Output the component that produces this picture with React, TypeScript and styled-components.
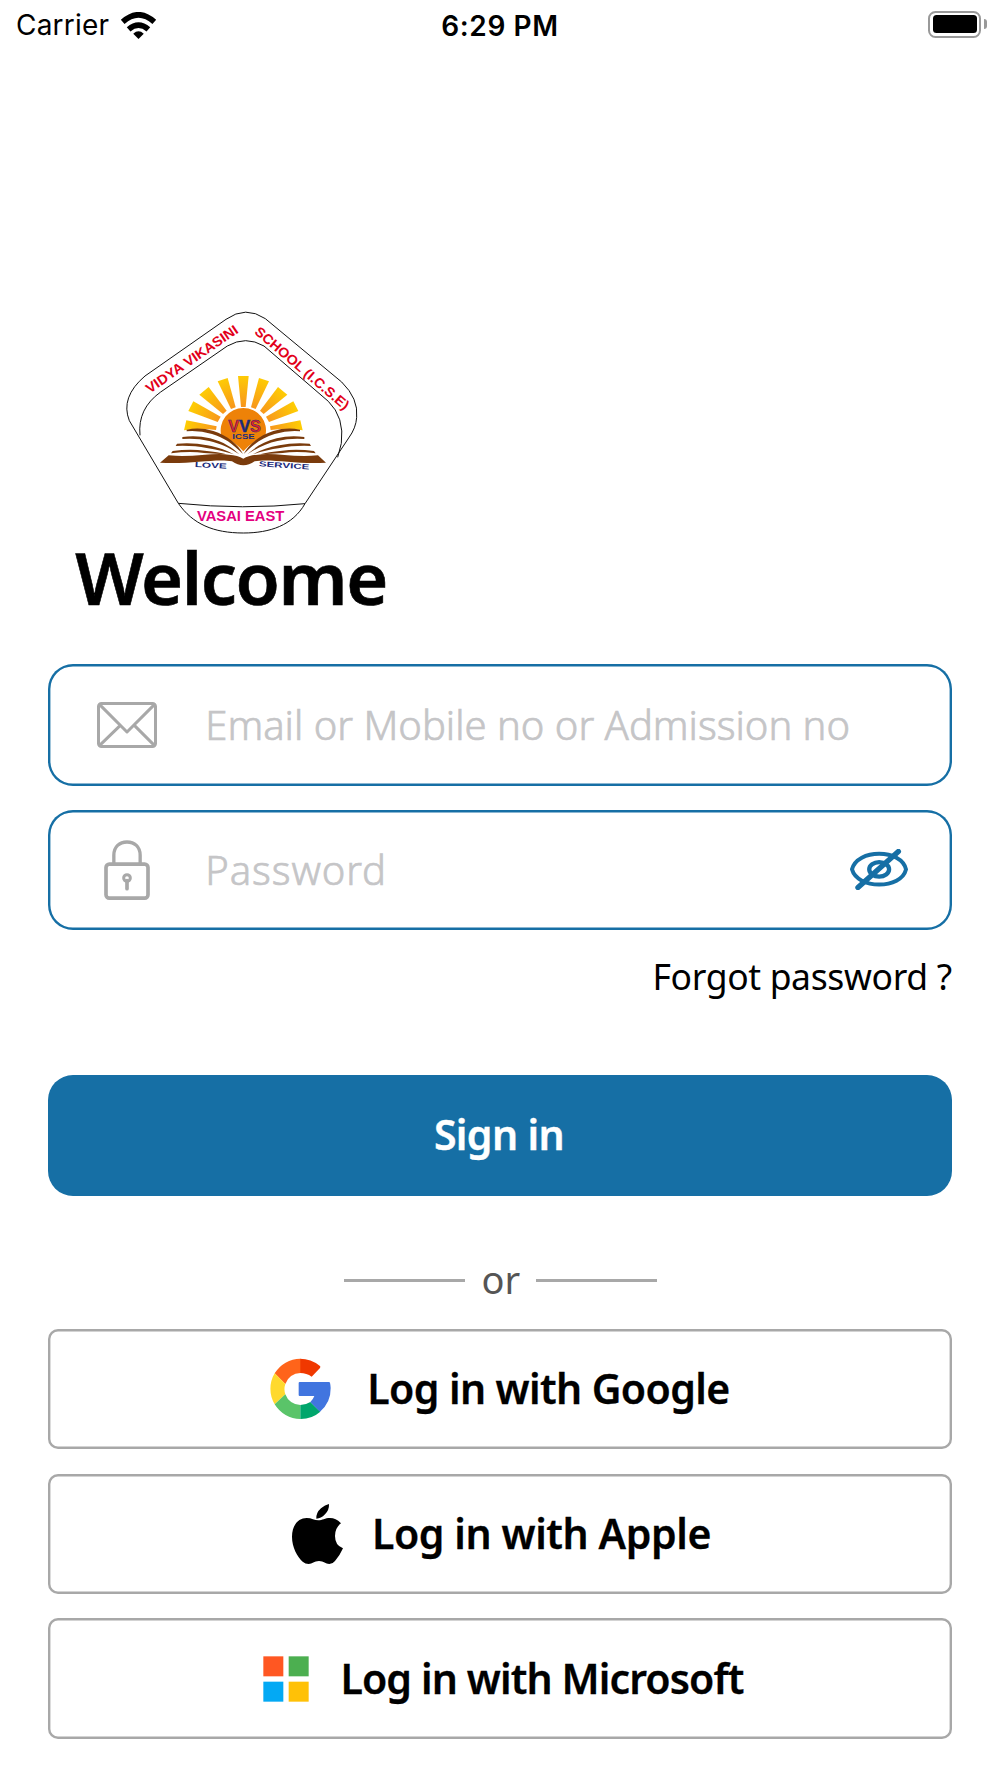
import React, { useState } from 'react';
import styled, { createGlobalStyle } from 'styled-components';

type Provider = {
  name: string;
  icon: React.ReactNode;
  gap: number;
  shift: number;
  spacing: number;
};

const WifiIcon = () => (
  <svg width="37" height="27" viewBox="0 0 110 82">
    <path d="M7 30Q55 -13 103 30" fill="none" stroke="#000" strokeWidth="17" />
    <path d="M25 53Q55 27 85 53" fill="none" stroke="#000" strokeWidth="17" />
    <path d="M39 66Q55 51 71 66L55 82Z" />
  </svg>
);

const MailIcon = () => (
  <svg width="60" height="46" viewBox="0 0 180 138" fill="none" stroke="#a8a8a8" strokeWidth="9" strokeLinejoin="round">
    <rect x="4.5" y="4.5" width="171" height="129" rx="9" />
    <path d="M8 8L90 90L172 8M70 70L8 130M112 70L172 130" />
  </svg>
);

const LockIcon = () => (
  <svg width="46" height="60" viewBox="0 0 137 180" fill="none" stroke="#a8a8a8">
    <rect x="5.5" y="72.5" width="126" height="102" rx="10" strokeWidth="11" />
    <path d="M29 70V46C29 20 46 6 68.500 6S108 20 108 46V70" strokeWidth="10" />
    <circle cx="68.500" cy="114" r="10" strokeWidth="9" />
    <path d="M68.500 122V146" strokeWidth="11" strokeLinecap="round" />
  </svg>
);

const HiddenEyeIcon = () => (
  <svg width="58" height="41" viewBox="0 0 175 123" fill="none" stroke="#166fa5" strokeWidth="12">
    <path d="M6 61C14 30 50 14 88 14S162 30 169 61C162 91 126 107 88 107S14 91 6 61Z" strokeLinejoin="round" />
    <ellipse cx="88" cy="61" rx="30" ry="22" strokeWidth="13" />
    <path d="M24 116L146 7" strokeWidth="16" strokeLinecap="round" />
  </svg>
);

const GoogleIcon = () => (
  <svg width="61" height="61" viewBox="91 115 183 183">
    <path fill="#f03800" d="M181 117Q214 117 240 138Q244 141 241 145L216 171Q201 160 181 160Z" />
    <path fill="#ff641a" d="M182 117A91 91 0 0 0 105 161L137 193A48 48 0 0 1 182 160Z" />
    <path fill="#ffd92d" d="M105 161A91 91 0 0 0 105 254L137 224A48 48 0 0 1 137 193Z" />
    <path fill="#5ac469" d="M105 254A91 91 0 0 0 182 298L182 256A48 48 0 0 1 137 224Z" />
    <path fill="#00a66c" d="M182 298A91 91 0 0 0 242 276L212 247Q198 256 182 256Z" />
    <path fill="#4175df" d="M180 187H269Q272 187 273 205A91 91 0 0 1 241 276L212 247Q220 240 224 229H180Q177 229 177 226V190Q177 187 180 187Z" />
  </svg>
);

const AppleIcon = () => (
  <svg width="51" height="60" viewBox="156 132 153 180">
    <path d="M229 176Q228 158 243 145Q255 134 267 132Q268 150 255 163Q243 176 229 176Z" />
    <path d="M303 190C292 178 282 174 270 174C255 174 247 181 235 181C224 181 215 174 200 174C175 174 156 196 156 230C156 262 172 290 188 305Q196 312 206 312C217 312 222 303 237 303C252 303 256 312 268 312Q278 312 285 303Q301 284 309 265Q285 256 285 228Q285 203 303 190Z" />
  </svg>
);

const MicrosoftIcon = () => (
  <svg width="46" height="46" viewBox="0 0 138 138">
    <path fill="#ff5722" d="M1 1H61V61H1Z" />
    <path fill="#4caf50" d="M77 1H137V61H77Z" />
    <path fill="#03a9f4" d="M1 77H61V137H1Z" />
    <path fill="#ffc107" d="M77 77H137V137H77Z" />
  </svg>
);

const rays = [
  'M384 228H416L407 321H393Z',
  'M447 234L477 244L437 327L423 322Z',
  'M504 261L532 284L461 342L450 332Z',
  'M550 304L565 333L477 366L468 350Z',
  'M571 361L578 391Q530 384 482 390L480 379Z',
];

const leftPages = [
  'M230 389Q270 381 310 393C350 405 385 434 399 462C366 430 343 413 306 402Q268 391 230 394Z',
  'M217 411Q260 405 300 415C340 425 368 444 388 463C358 443 330 430 298 423Q260 414 217 417Z',
  'M201 431Q250 427 292 436C325 442 350 452 372 463C346 455 320 448 290 444Q250 436 197 438Z',
  'M188 453Q240 446 284 452Q325 456 350 463Q320 462 282 459Q240 453 183 460Z',
];

const SchoolCrest = () => (
  <svg width="260" height="234" viewBox="0 0 780 702">
    <defs>
      <radialGradient id="ray" gradientUnits="userSpaceOnUse" cx="400" cy="400" r="190">
        <stop offset="0.4" stopColor="#f7931e" />
        <stop offset="1" stopColor="#ffd500" />
      </radialGradient>
    </defs>
    <g fill="none" stroke="#111" strokeWidth="3">
      <path d="M348 58Q407 16 466 56L695 246Q746 296 740 352Q738 384 716 414L585 611C548 676 480 699 400 699C310 699 248 672 205 610L58 362Q30 292 105 228Z" />
      <path d="M90 406Q82 326 152 276L352 138Q407 106 462 138L655 304Q704 352 694 430L683 472" />
      <path d="M205 610Q400 630 585 611" />
    </g>
    <g fill="url(#ray)">
      {rays.map(d => <path key={d} d={d} />)}
      <g transform="matrix(-1 0 0 1 800 0)">
        {rays.slice(1).map(d => <path key={d} d={d} />)}
      </g>
    </g>
    <path fill="#ee8208" d="M334 408A68 68 0 1 1 466 408Q426 424 400 454Q374 424 334 408Z" />
    <g fill="#7a3b0c">
      {leftPages.map(d => <path key={d} d={d} />)}
      <g transform="matrix(-1 0 0 1 800 0)">
        {leftPages.map(d => <path key={d} d={d} />)}
      </g>
      <path d="M150 488L176 466C250 474 310 456 356 464Q384 466 400 476Q416 466 444 464C490 456 550 474 624 466L648 488C560 494 480 474 434 484Q400 508 366 484C320 474 240 494 150 488Z" />
    </g>
    <g fontFamily="Liberation Sans, sans-serif" fontWeight="700">
      <text transform="translate(119 281) rotate(-34.500)" fill="#e2001a" fontSize="41" textLength="326" lengthAdjust="spacingAndGlyphs">VIDYA VIKASINI</text>
      <text transform="translate(431 99) rotate(40.500)" fill="#e2001a" fontSize="41" textLength="358" lengthAdjust="spacingAndGlyphs">SCHOOL (I.C.S.E)</text>
      <text x="261" y="663" fill="#e4007f" fontSize="42" textLength="262" lengthAdjust="spacingAndGlyphs">VASAI EAST</text>
      <g fill="#1b2a7b">
        <text transform="translate(254 501) rotate(3)" fontSize="22" textLength="96" lengthAdjust="spacingAndGlyphs">LOVE</text>
        <text transform="translate(446 499) rotate(3.500)" fontSize="22" textLength="152" lengthAdjust="spacingAndGlyphs">SERVICE</text>
        <text x="367" y="418" fontSize="19" textLength="67" lengthAdjust="spacingAndGlyphs">ICSE</text>
      </g>
      <text x="355" y="395" fontSize="50" fill="#e31e24" stroke="#1b2a7b" strokeWidth="1.500" textLength="98" lengthAdjust="spacingAndGlyphs">V<tspan fill="#1b2a7b">V</tspan>S</text>
    </g>
  </svg>
);

const providers: Provider[] = [
  { name: 'Google', icon: <GoogleIcon />, gap: 36, shift: 0, spacing: -0.6 },
  { name: 'Apple', icon: <AppleIcon />, gap: 29, shift: 3, spacing: -0.4 },
  { name: 'Microsoft', icon: <MicrosoftIcon />, gap: 31, shift: 7, spacing: -0.87 },
];

const App: React.FC = () => {
  const [login, setLogin] = useState('');
  const [password, setPassword] = useState('');

  return (
    <>
      <GlobalStyle />
      <StatusBar>
        <Carrier>
          Carrier
          <WifiIcon />
        </Carrier>
        <Time>6:29 PM</Time>
        <BatteryArea>
          <Battery />
          <BatteryTip />
        </BatteryArea>
      </StatusBar>
      <Screen>
        <Crest>
          <SchoolCrest />
        </Crest>
        <Title>Welcome</Title>
        <Field $height={121.7}>
          <FieldIcon><MailIcon /></FieldIcon>
          <Input
            placeholder="Email or Mobile no or Admission no"
            value={login}
            onChange={e => setLogin(e.target.value)}
          />
        </Field>
        <Field $height={120}>
          <FieldIcon><LockIcon /></FieldIcon>
          <Input
            type="password"
            placeholder="Password"
            $spacing={0.9}
            value={password}
            onChange={e => setPassword(e.target.value)}
          />
          <HiddenEyeIcon />
        </Field>
        <Forgot>Forgot password ?</Forgot>
        <SignIn>Sign in</SignIn>
        <Divider>
          <Rule />
          <Or>or</Or>
          <Rule />
        </Divider>
        <Providers>
          {providers.map(({ name, icon, gap, shift, spacing }) => (
            <ProviderButton key={name} $gap={gap} $shift={shift}>
              {icon}
              <ProviderLabel $spacing={spacing}>{`Log in with ${name}`}</ProviderLabel>
            </ProviderButton>
          ))}
        </Providers>
      </Screen>
    </>
  );
};

export default App;

const GlobalStyle = createGlobalStyle`
  * {
    box-sizing: border-box;
  }
  body {
    margin: 0;
    background: #fff;
    color: #000;
    font-family: 'Noto Sans', sans-serif;
  }
  svg {
    display: block;
    flex-shrink: 0;
  }
  button {
    font-family: inherit;
    color: inherit;
    cursor: pointer;
  }
`;

const StatusBar = styled.header`
  height: 50px;
  padding: 0 13px 0 16px;
  display: grid;
  grid-template-columns: 1fr auto 1fr;
  align-items: center;
  font-family: Inter, sans-serif;
  font-size: 28px;
`;

const Carrier = styled.div`
  display: flex;
  align-items: center;
  gap: 11px;
  letter-spacing: 0.2px;
`;

const Time = styled.div`
  padding: 1px 3px 0 0;
  font-weight: 600;
  letter-spacing: 0.6px;
`;

const BatteryArea = styled.div`
  display: flex;
  justify-content: flex-end;
  align-items: center;
  gap: 3px;
  padding-bottom: 2px;
`;

const Battery = styled.div`
  width: 53px;
  height: 27px;
  padding: 2.5px;
  border: 2px solid #999;
  border-radius: 7.5px;
  &::before {
    content: '';
    display: block;
    height: 100%;
    border-radius: 3.5px;
    background: #000;
  }
`;

const BatteryTip = styled.div`
  width: 3px;
  height: 10px;
  border-radius: 0 3px 3px 0;
  background: #999;
`;

const Screen = styled.main`
  display: flex;
  flex-direction: column;
  height: 1728px;
  padding: 250px 48.3px 0;
`;

const Crest = styled.div`
  padding-left: 62px;
`;

const Title = styled.h1`
  margin: 1px 0 45px 27px;
  font-size: 72px;
  font-weight: 600;
  line-height: 84px;
  letter-spacing: -1.4px;
  -webkit-text-stroke: 0.6px #000;
`;

const Field = styled.label<{ $height: number }>`
  height: ${p => p.$height}px;
  flex-shrink: 0;
  display: flex;
  align-items: center;
  padding: 0 44px 0 2px;
  box-shadow: inset 0 0 0 2.4px #166fa5;
  border-radius: 25px;
  & + & {
    margin-top: 24.3px;
  }
`;

const FieldIcon = styled.span`
  width: 153px;
  flex-shrink: 0;
  display: flex;
  justify-content: center;
`;

const Input = styled.input<{ $spacing?: number }>`
  flex: 1;
  min-width: 0;
  height: 80px;
  padding: 0 0 1px 2px;
  border: 0;
  outline: 0;
  background: transparent;
  font: 300 40px 'Noto Sans', sans-serif;
  letter-spacing: ${p => p.$spacing ?? 0}px;
  &::placeholder {
    color: #c5c5c7;
    opacity: 1;
    -webkit-text-stroke: 0.7px #c5c5c7;
  }
`;

const Forgot = styled.a`
  align-self: flex-end;
  margin: 22px 0 75px;
  font-size: 35.5px;
  line-height: 48px;
  letter-spacing: -0.35px;
`;

const SignIn = styled.button`
  height: 120.7px;
  flex-shrink: 0;
  padding: 0 2px 2px 0;
  border: 0;
  border-radius: 25px;
  background: #166fa5;
  && {
    color: #fff;
  }
  font-size: 41px;
  font-weight: 600;
  letter-spacing: -0.6px;
  -webkit-text-stroke: 0.4px #fff;
`;

const Divider = styled.div`
  display: flex;
  justify-content: center;
  align-items: center;
  gap: 17px;
  margin: 59px 0 26px;
  height: 48px;
`;

const Rule = styled.span`
  width: 121px;
  height: 2.4px;
  margin-top: 4px;
  background: #a8a8a8;
`;

const Or = styled.span`
  width: 37px;
  padding-top: 1px;
  text-align: center;
  font-size: 38px;
  line-height: 48px;
  color: #555;
`;

const Providers = styled.div`
  display: flex;
  flex-direction: column;
  gap: 24.5px;
`;

const ProviderButton = styled.button<{ $gap: number; $shift: number }>`
  height: 120.4px;
  display: flex;
  align-items: center;
  justify-content: center;
  gap: ${p => p.$gap}px;
  padding: 0 0 0 ${p => p.$shift}px;
  border: 0;
  box-shadow: inset 0 0 0 2.4px #a8a8a8;
  border-radius: 10px;
  background: #fff;
`;

const ProviderLabel = styled.span<{ $spacing: number }>`
  padding-bottom: 2px;
  font-size: 41px;
  font-weight: 600;
  white-space: nowrap;
  letter-spacing: ${p => p.$spacing}px;
  -webkit-text-stroke: 0.3px #000;
`;
